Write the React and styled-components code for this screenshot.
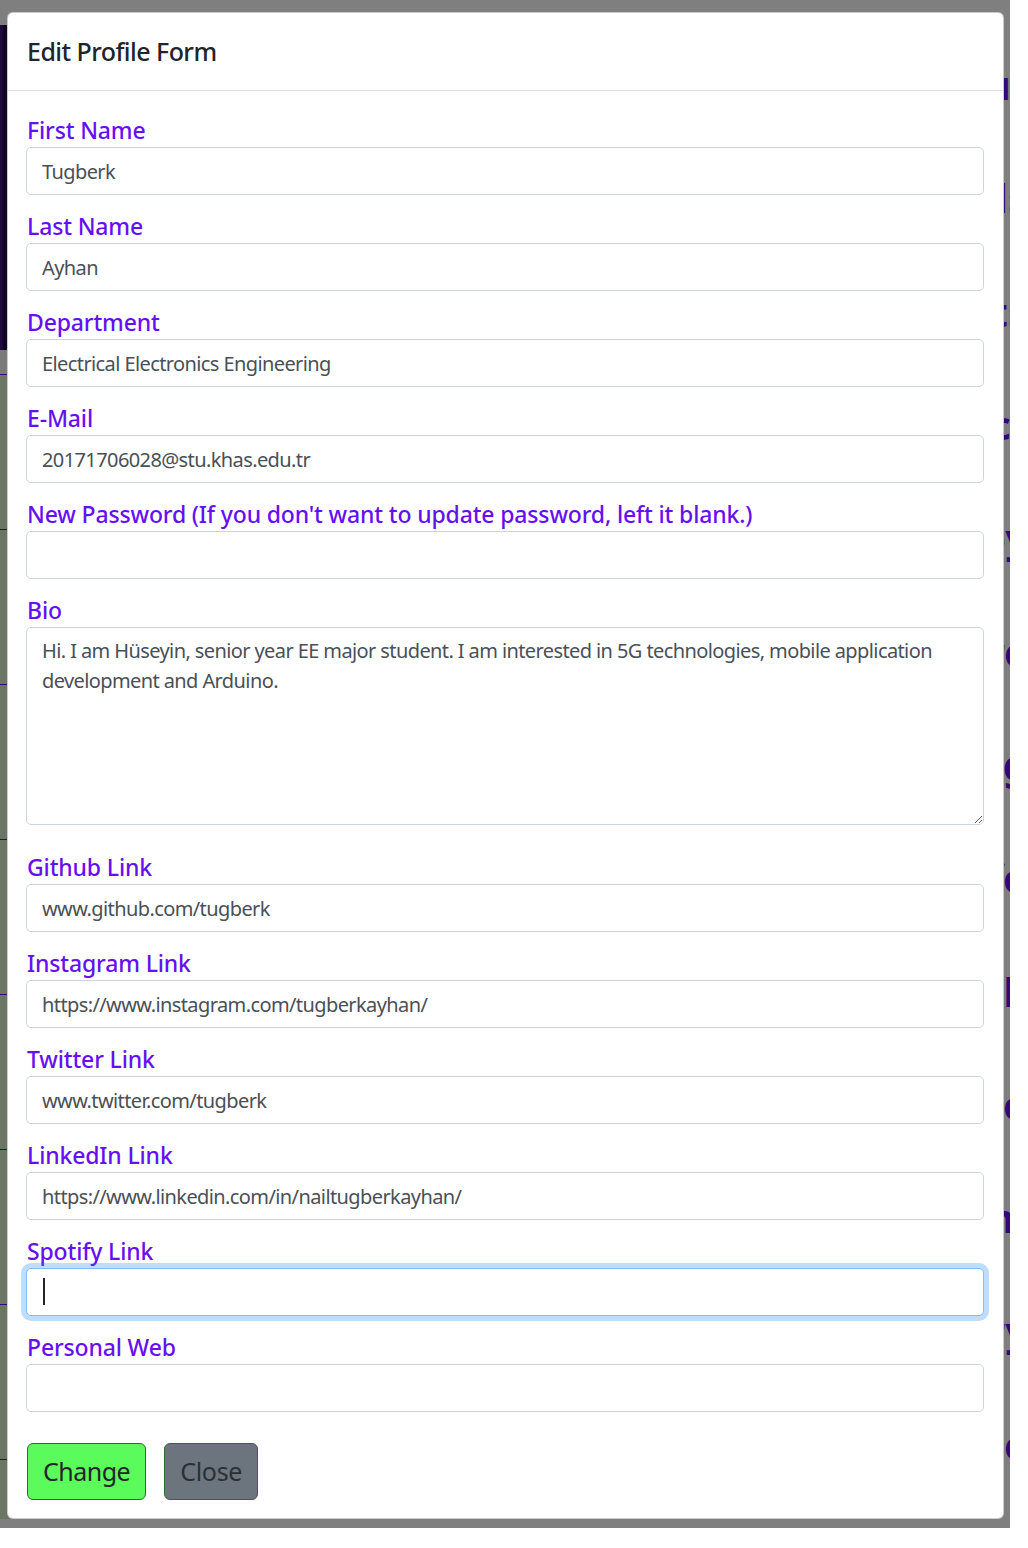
import styled, { createGlobalStyle } from 'styled-components'

const GlobalStyle = createGlobalStyle`
    body {
        margin: 0;
        background: #fff;
        font-family: "Noto Sans", "Open Sans", sans-serif;
    }
    * {
        box-sizing: border-box;
    }
`

const fields = [
    { label: 'First Name', value: 'Tugberk' },
    { label: 'Last Name', value: 'Ayhan' },
    { label: 'Department', value: 'Electrical Electronics Engineering' },
    { label: 'E-Mail', value: '20171706028@stu.khas.edu.tr' },
    { label: "New Password (If you don't want to update password, left it blank.)", value: '' },
]

const links = [
    { label: 'Github Link', value: 'www.github.com/tugberk' },
    { label: 'Instagram Link', value: 'https://www.instagram.com/tugberkayhan/' },
    { label: 'Twitter Link', value: 'www.twitter.com/tugberk' },
    { label: 'LinkedIn Link', value: 'https://www.linkedin.com/in/nailtugberkayhan/' },
    { label: 'Spotify Link', value: '', focused: true },
    { label: 'Personal Web', value: '' },
]

const bio = 'Hi. I am Hüseyin, senior year EE major student. I am interested in 5G technologies, mobile application development and Arduino.'

const behindWords = ['About', 'Skills', 'Projects', 'Contact', 'Hobby', 'More', 'Blog', 'Info', 'Work', 'Photo', 'Team', 'Gallery', 'Home']

const App = () => {
    return (
        <Stage>
            <GlobalStyle/>
            <BehindPage>
                <Sidebar>
                    <SideSpacer/>
                    <SideHero/>
                    <SideBand/>
                    <SideGreen/>
                    <SideFoot/>
                </Sidebar>
                <Content>
                    {behindWords.map((w) => (
                        <BehindLine key={w}>{w}</BehindLine>
                    ))}
                </Content>
            </BehindPage>
            <Overlay/>
            <Modal>
                <Header>
                    <Title>Edit Profile Form</Title>
                </Header>
                <Body>
                    {fields.map((f) => (
                        <Group key={f.label}>
                            <Label>{f.label}</Label>
                            <Input type="text" defaultValue={f.value} readOnly/>
                        </Group>
                    ))}
                    <Group>
                        <Label>Bio</Label>
                        <TextArea defaultValue={bio} readOnly/>
                    </Group>
                    {links.map((f) => (
                        <Group key={f.label} $first={f.label === 'Github Link'}>
                            <Label>{f.label}</Label>
                            <InputWrap>
                                <Input type="text" defaultValue={f.value} readOnly $focused={f.focused}/>
                                {f.focused && <Caret/>}
                            </InputWrap>
                        </Group>
                    ))}
                    <Buttons>
                        <Button $variant="change">Change</Button>
                        <Button $variant="close">Close</Button>
                    </Buttons>
                </Body>
            </Modal>
        </Stage>
    )
}

export default App

//styled components

const Stage = styled.div`
    position: relative;
    width: 1010px;
    height: 1528px;
    overflow: hidden;
    background: #fff;
`

const BehindPage = styled.div`
    display: flex;
    height: 100%;
`

const Sidebar = styled.div`
    display: flex;
    flex-direction: column;
    width: 220px;
`

const SideSpacer = styled.div`
    height: 25px;
    background: #fff;
`

const SideHero = styled.div`
    height: 325px;
    background: #1c0a3c;
    border-left: 3px solid #3a1480;
`

const SideBand = styled.div`
    height: 25px;
    background: #f4f4f4;
    border-bottom: 1px solid #6610f2;
`

const SideGreen = styled.div`
    flex: 1;
    background: repeating-linear-gradient(180deg, #d8ecc8 0 154px, #6610f2 154px 155px);
`

const SideFoot = styled.div`
    height: 9px;
    background: #fff;
`

const Content = styled.div`
    flex: 1;
    display: flex;
    flex-direction: column;
    align-items: flex-end;
    padding-top: 55px;
    margin-right: -18px;
`

const BehindLine = styled.div`
    height: 117px;
    font-family: "Noto Sans", sans-serif;
    font-weight: 700;
    font-size: 40px;
    line-height: 60px;
    color: #6610f2;
`

const Overlay = styled.div`
    position: absolute;
    inset: 0;
    background: rgba(0, 0, 0, 0.5);
`

const Modal = styled.div`
    position: absolute;
    left: 7px;
    top: 12px;
    width: 997px;
    background: #fff;
    border: 1px solid rgba(0, 0, 0, 0.2);
    border-radius: 6px;
    display: flex;
    flex-direction: column;
`

const Header = styled.div`
    padding: 20px 19px 19px;
    border-bottom: 1px solid #dee2e6;
`

const Title = styled.h5`
    margin: 0;
    font-size: 25px;
    line-height: 37.5px;
    font-weight: 500;
    letter-spacing: -0.55px;
    color: #212529;
`

const Body = styled.div`
    display: flex;
    flex-direction: column;
    padding: 20px 19px 18px 18px;
`

const Group = styled.div`
    display: flex;
    flex-direction: column;
    margin-top: ${(p) => (p.$first ? '23px' : '12px')};
    &:first-child {
        margin-top: 0;
    }
`

const Label = styled.label`
    font-size: 23px;
    line-height: 34px;
    margin: 2px 0 0 1px;
    font-weight: 500;
    letter-spacing: -0.15px;
    color: #6610f2;
    white-space: nowrap;
`

const InputWrap = styled.div`
    position: relative;
`

const Input = styled.input`
    display: block;
    width: 100%;
    height: 48px;
    padding: 8.5px 15px 6.5px;
    font-family: inherit;
    font-size: 20px;
    line-height: 30px;
    letter-spacing: -0.6px;
    color: #495057;
    background: #fff;
    border: 1px solid ${(p) => (p.$focused ? '#80bdff' : '#ced4da')};
    border-radius: 5px;
    outline: none;
    box-shadow: ${(p) => (p.$focused ? '0 0 0 5px rgba(0, 123, 255, 0.25)' : 'none')};
`

const Caret = styled.span`
    position: absolute;
    left: 17px;
    top: 10px;
    width: 2px;
    height: 27px;
    background: #212529;
`

const TextArea = styled.textarea`
    display: block;
    width: 100%;
    height: 198px;
    padding: 8.5px 15px 6.5px;
    font-family: inherit;
    font-size: 20px;
    line-height: 30px;
    letter-spacing: -0.6px;
    color: #495057;
    background: #fff;
    border: 1px solid #ced4da;
    border-radius: 5px;
    outline: none;
    resize: vertical;
`

const Buttons = styled.div`
    display: flex;
    gap: 18px;
    margin-top: 31px;
    padding-left: 1px;
`

const Button = styled.button`
    font-family: inherit;
    font-size: 25px;
    line-height: 35px;
    letter-spacing: ${(p) => (p.$variant === 'change' ? '-0.5px' : '-0.3px')};
    padding: 10px 15px;
    border-radius: 6px;
    border: 1px solid #2f6a2f;
    background: ${(p) => (p.$variant === 'change' ? '#5afb5a' : '#6c757d')};
    color: ${(p) => (p.$variant === 'change' ? '#212529' : '#2b3035')};
    cursor: pointer;
`
